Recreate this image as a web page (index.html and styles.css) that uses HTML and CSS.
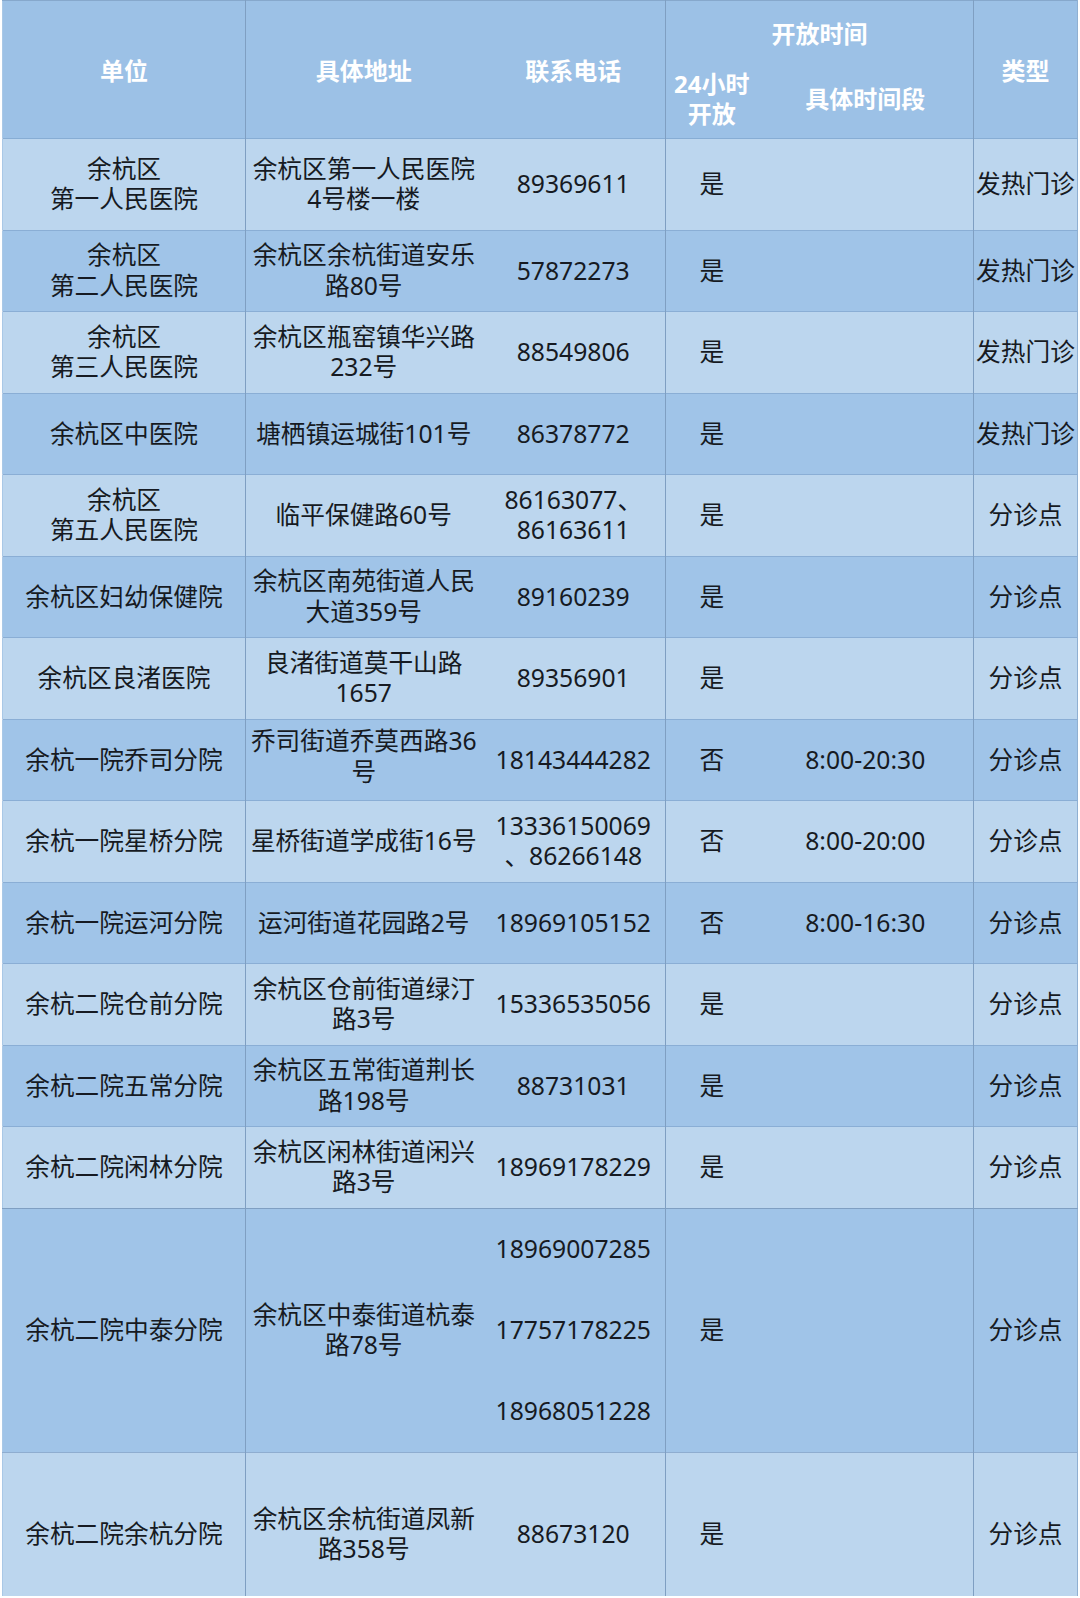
FILE: index.html
```html
<!DOCTYPE html>
<html lang="zh-CN">
<head>
<meta charset="utf-8">
<title>余杭区发热门诊及分诊点</title>
<link rel="stylesheet" href="styles.css">
</head>
<body>
<div class="wrap">
<table class="clinics">
  <colgroup>
    <col class="c-unit">
    <col class="c-addr">
    <col class="c-tel">
    <col class="c-24">
    <col class="c-time">
    <col class="c-type">
  </colgroup>
  <thead>
    <tr class="h1">
      <th rowspan="2" class="sep">单位</th>
      <th rowspan="2">具体地址</th>
      <th rowspan="2" class="sep">联系电话</th>
      <th colspan="2" class="sep">开放时间</th>
      <th rowspan="2">类型</th>
    </tr>
    <tr class="h2">
      <th class="sub">24小时<br>开放</th>
      <th class="sep sub">具体时间段</th>
    </tr>
  </thead>
  <tbody>
    <tr class="light first">
      <td class="sep">余杭区<br>第一人民医院</td>
      <td>余杭区第一人民医院<br>4号楼一楼</td>
      <td class="sep">89369611</td>
      <td>是</td>
      <td class="sep"></td>
      <td>发热门诊</td>
    </tr>
    <tr class="dark">
      <td class="sep">余杭区<br>第二人民医院</td>
      <td>余杭区余杭街道安乐<br>路80号</td>
      <td class="sep">57872273</td>
      <td>是</td>
      <td class="sep"></td>
      <td>发热门诊</td>
    </tr>
    <tr class="light">
      <td class="sep">余杭区<br>第三人民医院</td>
      <td>余杭区瓶窑镇华兴路<br>232号</td>
      <td class="sep">88549806</td>
      <td>是</td>
      <td class="sep"></td>
      <td>发热门诊</td>
    </tr>
    <tr class="dark">
      <td class="sep">余杭区中医院</td>
      <td>塘栖镇运城街101号</td>
      <td class="sep">86378772</td>
      <td>是</td>
      <td class="sep"></td>
      <td>发热门诊</td>
    </tr>
    <tr class="light">
      <td class="sep">余杭区<br>第五人民医院</td>
      <td>临平保健路60号</td>
      <td class="sep">86163077、<br>86163611</td>
      <td>是</td>
      <td class="sep"></td>
      <td>分诊点</td>
    </tr>
    <tr class="dark">
      <td class="sep">余杭区妇幼保健院</td>
      <td>余杭区南苑街道人民<br>大道359号</td>
      <td class="sep">89160239</td>
      <td>是</td>
      <td class="sep"></td>
      <td>分诊点</td>
    </tr>
    <tr class="light">
      <td class="sep">余杭区良渚医院</td>
      <td>良渚街道莫干山路<br>1657</td>
      <td class="sep">89356901</td>
      <td>是</td>
      <td class="sep"></td>
      <td>分诊点</td>
    </tr>
    <tr class="dark">
      <td class="sep">余杭一院乔司分院</td>
      <td class="up">乔司街道乔莫西路36<br>号</td>
      <td class="sep">18143444282</td>
      <td>否</td>
      <td class="sep">8:00-20:30</td>
      <td>分诊点</td>
    </tr>
    <tr class="light">
      <td class="sep">余杭一院星桥分院</td>
      <td>星桥街道学成街16号</td>
      <td class="sep">13336150069<br>、86266148</td>
      <td>否</td>
      <td class="sep">8:00-20:00</td>
      <td>分诊点</td>
    </tr>
    <tr class="dark">
      <td class="sep">余杭一院运河分院</td>
      <td>运河街道花园路2号</td>
      <td class="sep">18969105152</td>
      <td>否</td>
      <td class="sep">8:00-16:30</td>
      <td>分诊点</td>
    </tr>
    <tr class="light">
      <td class="sep">余杭二院仓前分院</td>
      <td>余杭区仓前街道绿汀<br>路3号</td>
      <td class="sep">15336535056</td>
      <td>是</td>
      <td class="sep"></td>
      <td>分诊点</td>
    </tr>
    <tr class="dark">
      <td class="sep">余杭二院五常分院</td>
      <td>余杭区五常街道荆长<br>路198号</td>
      <td class="sep">88731031</td>
      <td>是</td>
      <td class="sep"></td>
      <td>分诊点</td>
    </tr>
    <tr class="light">
      <td class="sep">余杭二院闲林分院</td>
      <td>余杭区闲林街道闲兴<br>路3号</td>
      <td class="sep">18969178229</td>
      <td>是</td>
      <td class="sep"></td>
      <td>分诊点</td>
    </tr>
    <tr class="dark multi top">
      <td rowspan="3" class="sep">余杭二院中泰分院</td>
      <td rowspan="3">余杭区中泰街道杭泰<br>路78号</td>
      <td class="sep">18969007285</td>
      <td rowspan="3">是</td>
      <td rowspan="3" class="sep"></td>
      <td rowspan="3">分诊点</td>
    </tr>
    <tr class="dark multi">
      <td class="sep">17757178225</td>
    </tr>
    <tr class="dark multi">
      <td class="sep">18968051228</td>
    </tr>
    <tr class="light last">
      <td class="sep">余杭二院余杭分院</td>
      <td>余杭区余杭街道凤新<br>路358号</td>
      <td class="sep">88673120</td>
      <td>是</td>
      <td class="sep"></td>
      <td>分诊点</td>
    </tr>
  </tbody>
</table>
</div>
</body>
</html>
```

FILE: styles.css
```css
html, body {
  margin: 0;
  padding: 0;
  background: #ffffff;
}

.wrap {
  padding: 0 3px 2px 2px;
}

.clinics {
  width: 1075px;
  border-collapse: collapse;
  table-layout: fixed;
  font-family: "Noto Sans", "Noto Sans CJK SC", sans-serif;
  font-size: 24.7px;
  line-height: 30.5px;
  color: #161a22;
  border-top: 1px solid #86a8cc;
  border-left: 1px solid #a9c8e6;
  border-right: 1px solid #8fb0d2;
}

.c-unit { width: 243px; }
.c-addr { width: 236px; }
.c-tel  { width: 184px; }
.c-24   { width: 92px; }
.c-time { width: 216px; }
.c-type { width: 104px; }

th, td {
  padding: 0;
  text-align: center;
  vertical-align: middle;
}

th.sep, td.sep {
  border-right: 1px solid #7f9fc2;
}

thead th {
  background: #9cc1e6;
  color: #ffffff;
  font-weight: 700;
  font-size: 24px;
  line-height: 30px;
}

.h1 { height: 66px; }
.h2 { height: 72px; }

.h1 th[rowspan] {
  padding-top: 2px;
}

.h2 th.sub {
  padding-bottom: 6px;
}

tbody tr { height: 81.5px; }
tbody tr.first { height: 91.5px; }
tbody tr.last { height: 143px; }
tbody tr.last td { padding-top: 20px; }

tbody tr td {
  border-top: 1px solid rgba(110, 148, 190, 0.45);
}

tr.light td { background: #bcd6ee; }
tr.dark td { background: #a0c4e8; }

tr.multi td { border-top: none; }
tr.multi.top td { border-top: 1px solid #7f9fc2; }
tr.multi + tr.light td { border-top: 1px solid #8eadd0; }

td.up {
  padding-bottom: 6px;
}
```
